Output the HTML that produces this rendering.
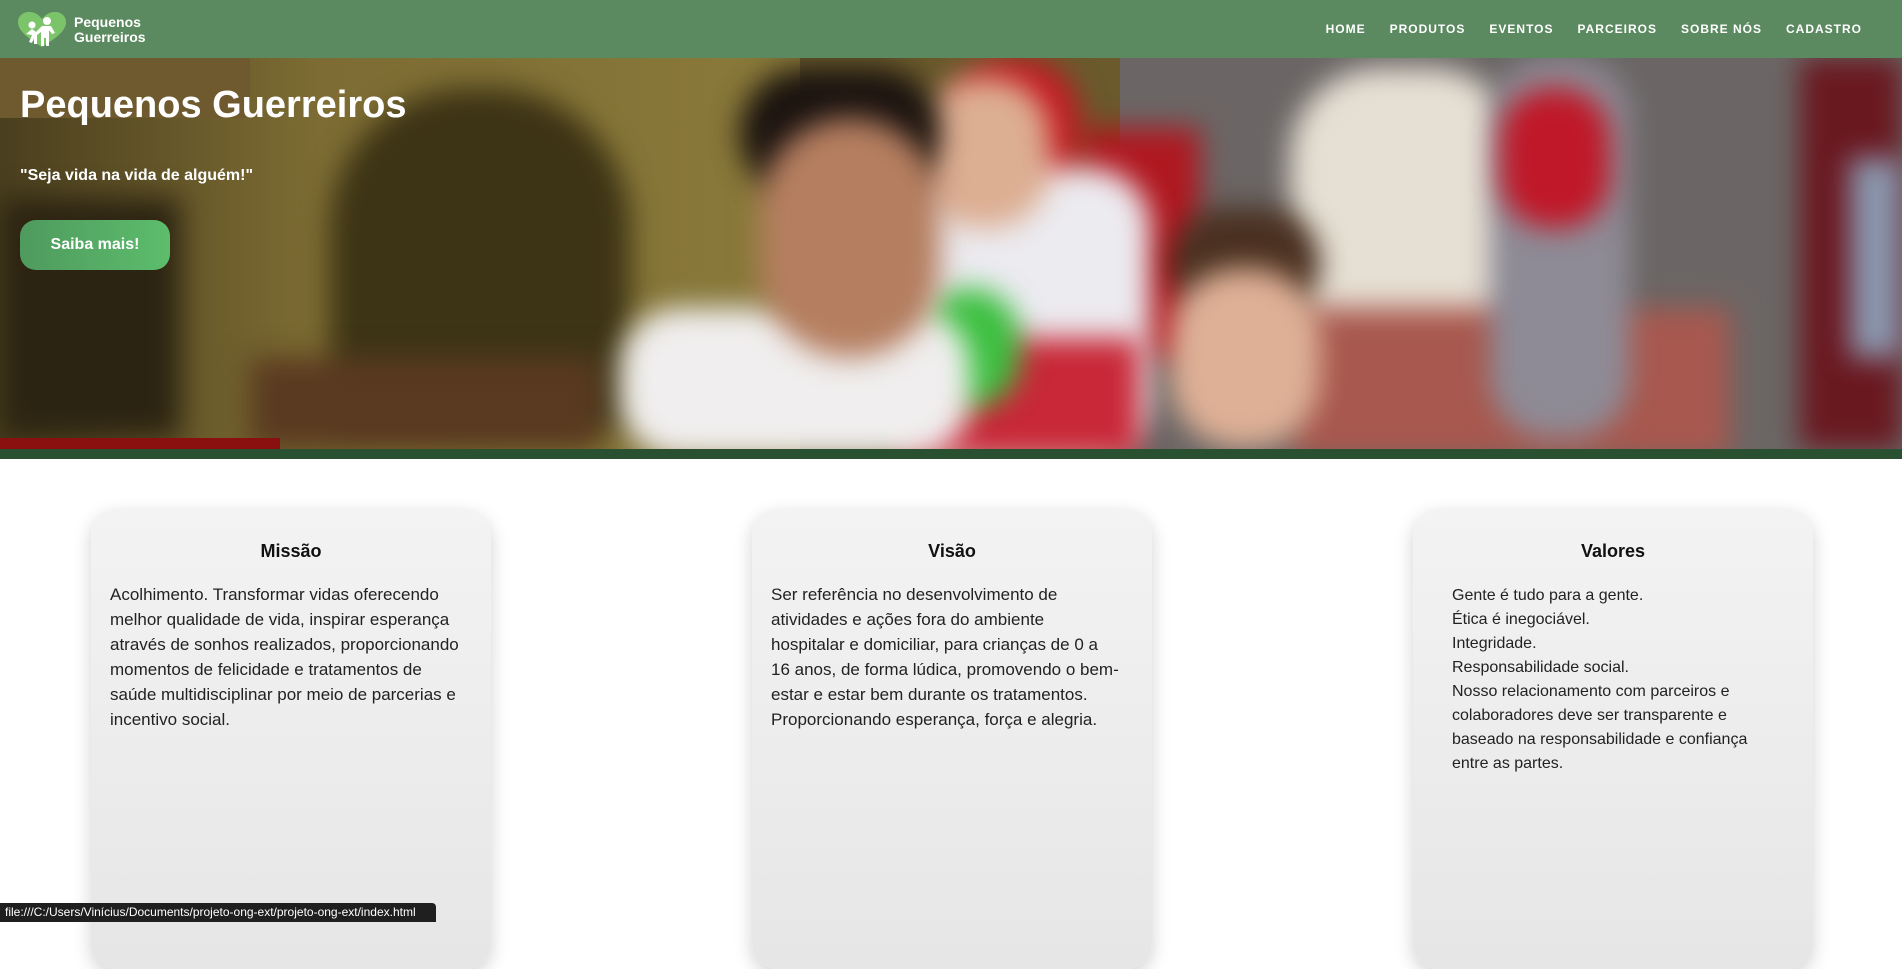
<!DOCTYPE html>
<html><head><meta charset="utf-8"><style>
*{margin:0;padding:0;box-sizing:border-box}
body{width:1902px;height:922px;overflow:hidden;background:#fff;font-family:"Liberation Sans",sans-serif;position:relative}
header{position:absolute;left:0;top:0;width:1902px;height:58px;background:#5c8a60;z-index:5}
.logo{position:absolute;left:18px;top:12px}
.logot{position:absolute;left:74px;top:15px;color:#fff;font-size:14px;font-weight:bold;line-height:15px}
nav{position:absolute;right:40px;top:22px;display:flex;gap:24px}
nav a{color:#fff;font-size:12px;font-weight:bold;letter-spacing:1px;text-decoration:none}
.hero{position:absolute;left:0;top:58px;width:1902px;height:391px;overflow:hidden;background:#6a5a2c}
.hero div{position:absolute}
.b{filter:blur(14px)}
.band{position:absolute;left:0;top:449px;width:1902px;height:10px;background:#2a5032}
h1{position:absolute;left:20px;top:84px;color:#fff;font-size:38px;font-weight:bold;z-index:3}
.q{position:absolute;left:20px;top:167px;color:#fff;font-size:16px;font-weight:bold;z-index:3}
.btn{position:absolute;left:20px;top:220px;width:150px;height:50px;border-radius:16px;background:linear-gradient(90deg,#4f9a5e,#5cbd6c);color:#fff;font-weight:bold;font-size:16px;display:flex;align-items:center;justify-content:center;z-index:3}
.card{position:absolute;top:509px;width:400px;height:460px;border-radius:26px;background:linear-gradient(180deg,#f3f3f3,#e6e6e6);box-shadow:0 6px 18px rgba(0,0,0,.18)}
.card h3{text-align:center;font-size:18px;margin-top:32px;color:#111}
.card p{font-size:17px;line-height:25px;color:#222;margin-left:19px;width:350px;margin-top:20px}
.card.v p{font-size:16px;line-height:24px;margin-left:39px;width:310px;margin-top:22px}
.status{position:absolute;left:0;top:903px;width:436px;height:19px;background:#1f1f1f;color:#fff;font-size:12px;line-height:19px;padding-left:5px;border-radius:0 4px 0 0}
</style></head><body>
<header>
<svg class="logo" width="48" height="36" viewBox="0 0 48 36"><path d="M24 35C10 26 0 19 0 10 0 4 5 0 11 0c6 0 10 3 13 7 3-4 7-7 13-7 6 0 11 4 11 10 0 9-10 16-24 25z" fill="#7cc46a"/><circle cx="14" cy="13" r="3.5" fill="#fff"/><circle cx="29" cy="9" r="4" fill="#fff"/><path d="M8 22l6-5 4 3 6-6h9l4 7-3 1-3-4v16h-3v-8h-2v8h-3V20l-4 3v9h-3v-6l-2 5-3-1 3-7z" fill="#fff"/></svg>
<div class="logot">Pequenos<br>Guerreiros</div>
<nav><a>HOME</a><a>PRODUTOS</a><a>EVENTOS</a><a>PARCEIROS</a><a>SOBRE NÓS</a><a>CADASTRO</a></nav>
</header>
<div class="hero">
<div style="left:0;top:0;width:800px;height:391px;background:linear-gradient(90deg,#4a3f1e,#7d6c33 40%,#8a7a3a)"></div>
<div class="b" style="left:330px;top:30px;width:300px;height:340px;border-radius:140px 140px 0 0;background:#3d3415"></div>
<div class="b" style="left:0;top:140px;width:180px;height:240px;background:#2c2412"></div>
<div style="left:0;top:0;width:250px;height:60px;background:#6e5a2e"></div>
<div class="b" style="left:250px;top:300px;width:350px;height:91px;background:#5a3a20"></div>
<div style="left:0;top:380px;width:280px;height:11px;background:#8a1010"></div>
<div style="left:1120px;top:0;width:782px;height:391px;background:#6b6665"></div>
<div class="b" style="left:1290px;top:10px;width:230px;height:300px;border-radius:90px;background:#e6e0d4"></div>
<div class="b" style="left:1290px;top:250px;width:440px;height:150px;background:#a8584e"></div>
<div class="b" style="left:1490px;top:0;width:140px;height:380px;border-radius:60px;background:#8e8b96"></div>
<div class="b" style="left:1500px;top:30px;width:110px;height:140px;border-radius:50px;background:#c01828"></div>
<div class="b" style="left:1800px;top:0;width:102px;height:391px;background:#6a1820"></div>
<div class="b" style="left:1850px;top:100px;width:52px;height:200px;background:#8a98b0"></div>
<div class="b" style="left:1080px;top:70px;width:120px;height:230px;background:#b01820"></div>
<div class="b" style="left:950px;top:0;width:130px;height:180px;border-radius:60px;background:#c41a22"></div>
<div class="b" style="left:900px;top:110px;width:250px;height:290px;border-radius:60px;background:#ecebf0"></div>
<div class="b" style="left:900px;top:280px;width:240px;height:120px;background:#c82838"></div>
<div class="b" style="left:920px;top:230px;width:100px;height:120px;border-radius:50px;background:#3cc040"></div>
<div class="b" style="left:920px;top:20px;width:130px;height:150px;border-radius:60px;background:#dcae92"></div>
<div class="b" style="left:620px;top:250px;width:350px;height:150px;border-radius:60px;background:#f0eeee"></div>
<div class="b" style="left:740px;top:10px;width:200px;height:130px;border-radius:90px;background:#1c1410"></div>
<div class="b" style="left:760px;top:60px;width:180px;height:240px;border-radius:90px;background:#b57e60"></div>
<div class="b" style="left:1170px;top:150px;width:150px;height:110px;border-radius:70px;background:#4a3020"></div>
<div class="b" style="left:1170px;top:210px;width:150px;height:180px;border-radius:70px;background:#deb096"></div>
</div>
<div class="band"></div>
<h1>Pequenos Guerreiros</h1>
<div class="q">"Seja vida na vida de alguém!"</div>
<div class="btn">Saiba mais!</div>
<div class="card" style="left:91px"><h3>Missão</h3><p>Acolhimento. Transformar vidas oferecendo melhor qualidade de vida, inspirar esperança através de sonhos realizados, proporcionando momentos de felicidade e tratamentos de saúde multidisciplinar por meio de parcerias e incentivo social.</p></div>
<div class="card" style="left:752px"><h3>Visão</h3><p>Ser referência no desenvolvimento de atividades e ações fora do ambiente hospitalar e domiciliar, para crianças de 0 a 16 anos, de forma lúdica, promovendo o bem-estar e estar bem durante os tratamentos. Proporcionando esperança, força e alegria.</p></div>
<div class="card v" style="left:1413px"><h3>Valores</h3><p>Gente é tudo para a gente.<br>Ética é inegociável.<br>Integridade.<br>Responsabilidade social.<br>Nosso relacionamento com parceiros e colaboradores deve ser transparente e baseado na responsabilidade e confiança entre as partes.</p></div>
<div class="status">file:///C:/Users/Vinícius/Documents/projeto-ong-ext/projeto-ong-ext/index.html</div>
</body></html>
